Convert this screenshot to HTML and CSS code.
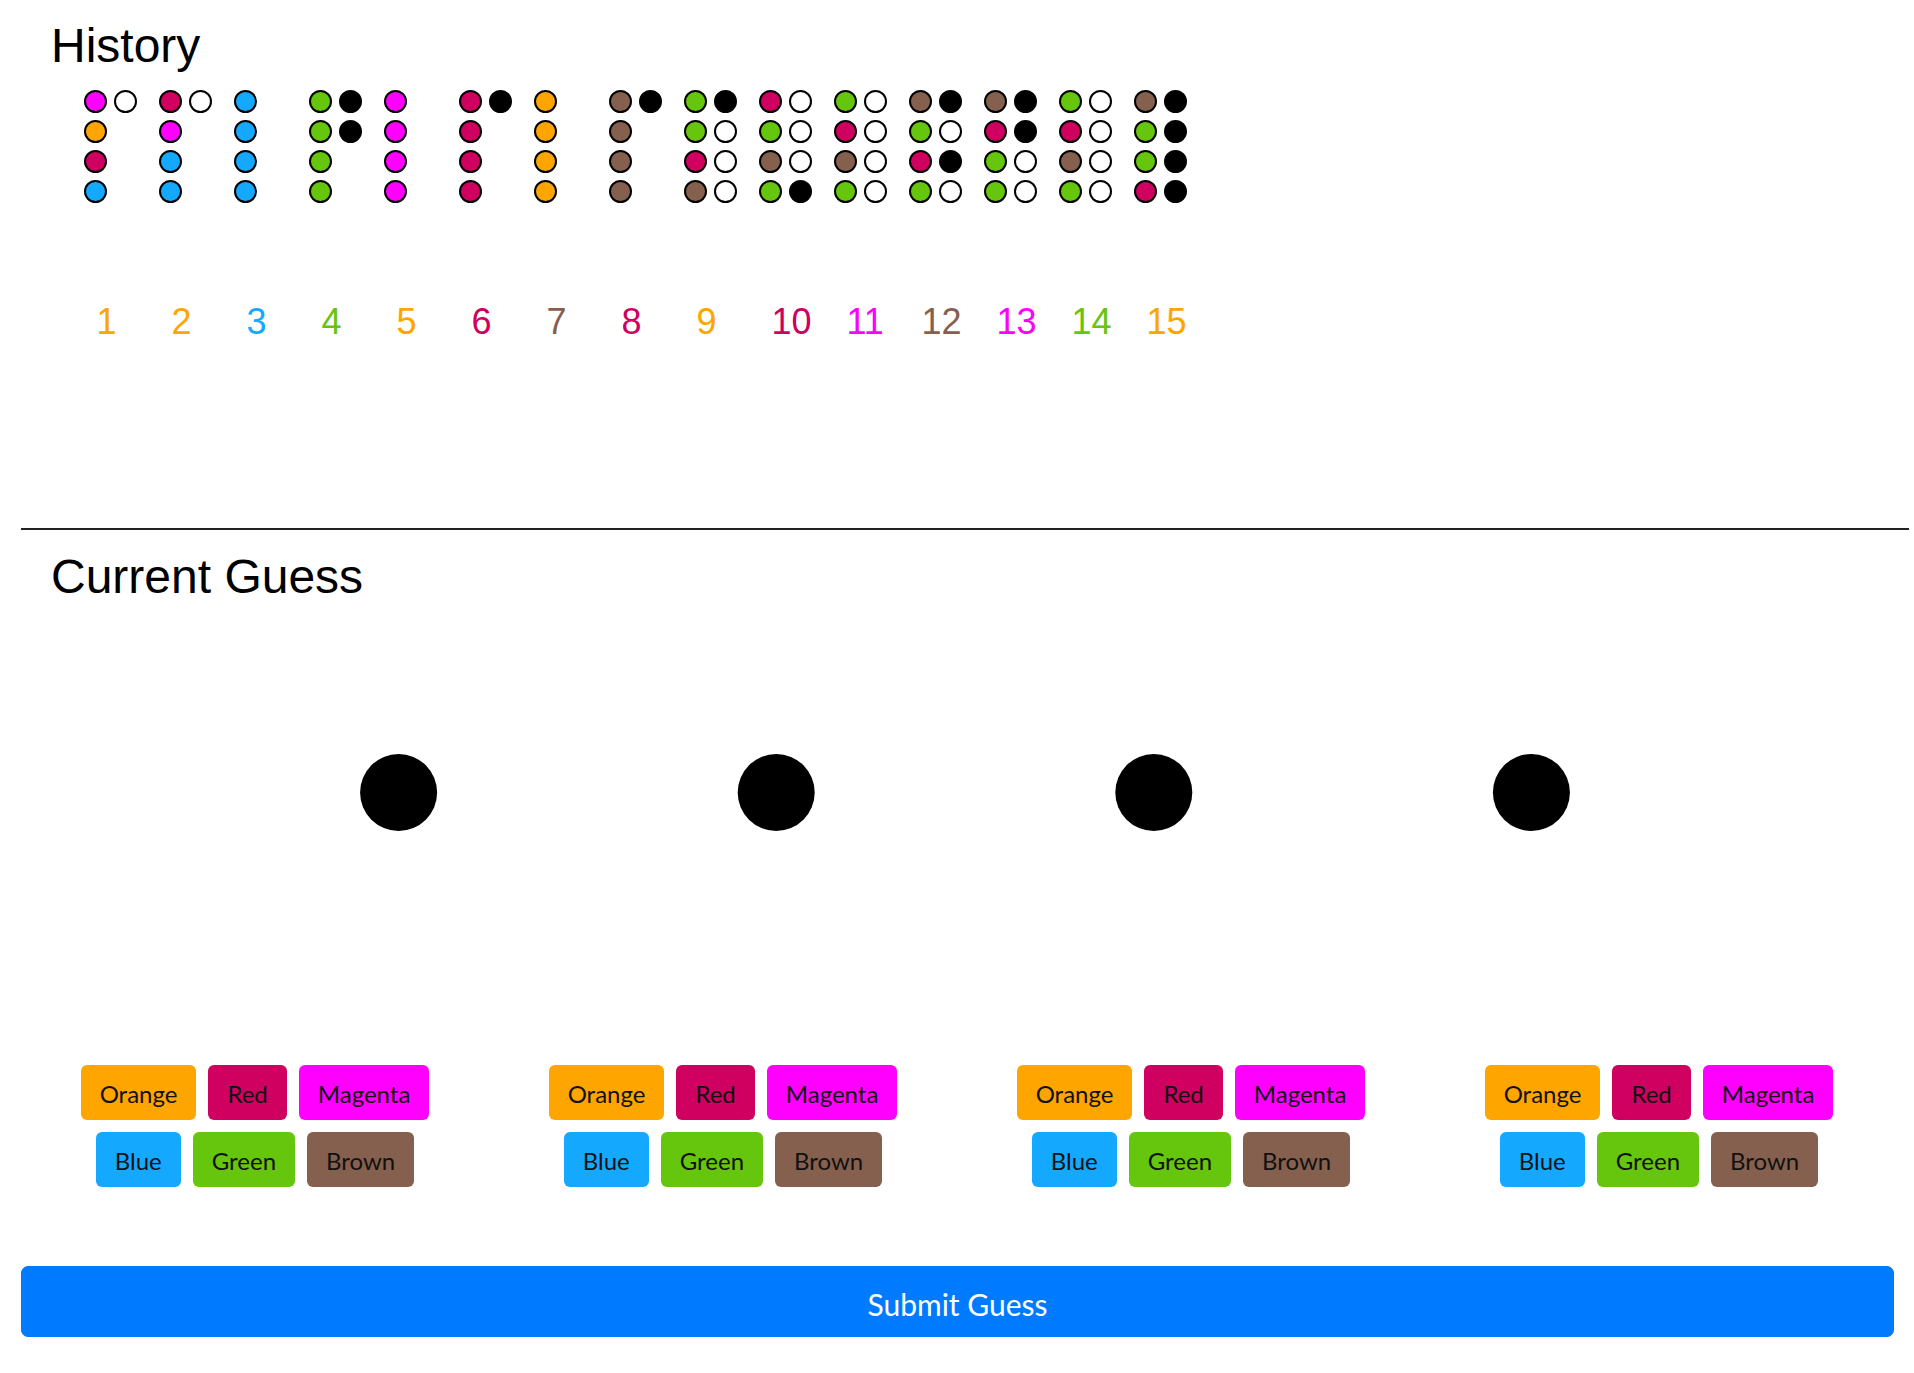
FILE: index.html
```html
<!DOCTYPE html>
<html lang="en">
<head>
<meta charset="utf-8">
<title>Mastermind</title>
<link rel="stylesheet" href="styles.css">
</head>
<body>
<main class="game">
  <section class="history">
    <h2 class="title">History</h2>
    <div class="board">
      <div class="round">
        <div class="peg-row"><span class="peg magenta"></span><span class="peg white"></span></div>
        <div class="peg-row"><span class="peg orange"></span></div>
        <div class="peg-row"><span class="peg red"></span></div>
        <div class="peg-row"><span class="peg blue"></span></div>
        <div class="num t-orange">1</div>
      </div>
      <div class="round">
        <div class="peg-row"><span class="peg red"></span><span class="peg white"></span></div>
        <div class="peg-row"><span class="peg magenta"></span></div>
        <div class="peg-row"><span class="peg blue"></span></div>
        <div class="peg-row"><span class="peg blue"></span></div>
        <div class="num t-orange">2</div>
      </div>
      <div class="round">
        <div class="peg-row"><span class="peg blue"></span></div>
        <div class="peg-row"><span class="peg blue"></span></div>
        <div class="peg-row"><span class="peg blue"></span></div>
        <div class="peg-row"><span class="peg blue"></span></div>
        <div class="num t-blue">3</div>
      </div>
      <div class="round">
        <div class="peg-row"><span class="peg green"></span><span class="peg black"></span></div>
        <div class="peg-row"><span class="peg green"></span><span class="peg black"></span></div>
        <div class="peg-row"><span class="peg green"></span></div>
        <div class="peg-row"><span class="peg green"></span></div>
        <div class="num t-green">4</div>
      </div>
      <div class="round">
        <div class="peg-row"><span class="peg magenta"></span></div>
        <div class="peg-row"><span class="peg magenta"></span></div>
        <div class="peg-row"><span class="peg magenta"></span></div>
        <div class="peg-row"><span class="peg magenta"></span></div>
        <div class="num t-orange">5</div>
      </div>
      <div class="round">
        <div class="peg-row"><span class="peg red"></span><span class="peg black"></span></div>
        <div class="peg-row"><span class="peg red"></span></div>
        <div class="peg-row"><span class="peg red"></span></div>
        <div class="peg-row"><span class="peg red"></span></div>
        <div class="num t-red">6</div>
      </div>
      <div class="round">
        <div class="peg-row"><span class="peg orange"></span></div>
        <div class="peg-row"><span class="peg orange"></span></div>
        <div class="peg-row"><span class="peg orange"></span></div>
        <div class="peg-row"><span class="peg orange"></span></div>
        <div class="num t-brown">7</div>
      </div>
      <div class="round">
        <div class="peg-row"><span class="peg brown"></span><span class="peg black"></span></div>
        <div class="peg-row"><span class="peg brown"></span></div>
        <div class="peg-row"><span class="peg brown"></span></div>
        <div class="peg-row"><span class="peg brown"></span></div>
        <div class="num t-red">8</div>
      </div>
      <div class="round">
        <div class="peg-row"><span class="peg green"></span><span class="peg black"></span></div>
        <div class="peg-row"><span class="peg green"></span><span class="peg white"></span></div>
        <div class="peg-row"><span class="peg red"></span><span class="peg white"></span></div>
        <div class="peg-row"><span class="peg brown"></span><span class="peg white"></span></div>
        <div class="num t-orange">9</div>
      </div>
      <div class="round">
        <div class="peg-row"><span class="peg red"></span><span class="peg white"></span></div>
        <div class="peg-row"><span class="peg green"></span><span class="peg white"></span></div>
        <div class="peg-row"><span class="peg brown"></span><span class="peg white"></span></div>
        <div class="peg-row"><span class="peg green"></span><span class="peg black"></span></div>
        <div class="num t-red">10</div>
      </div>
      <div class="round">
        <div class="peg-row"><span class="peg green"></span><span class="peg white"></span></div>
        <div class="peg-row"><span class="peg red"></span><span class="peg white"></span></div>
        <div class="peg-row"><span class="peg brown"></span><span class="peg white"></span></div>
        <div class="peg-row"><span class="peg green"></span><span class="peg white"></span></div>
        <div class="num t-magenta">11</div>
      </div>
      <div class="round">
        <div class="peg-row"><span class="peg brown"></span><span class="peg black"></span></div>
        <div class="peg-row"><span class="peg green"></span><span class="peg white"></span></div>
        <div class="peg-row"><span class="peg red"></span><span class="peg black"></span></div>
        <div class="peg-row"><span class="peg green"></span><span class="peg white"></span></div>
        <div class="num t-brown">12</div>
      </div>
      <div class="round">
        <div class="peg-row"><span class="peg brown"></span><span class="peg black"></span></div>
        <div class="peg-row"><span class="peg red"></span><span class="peg black"></span></div>
        <div class="peg-row"><span class="peg green"></span><span class="peg white"></span></div>
        <div class="peg-row"><span class="peg green"></span><span class="peg white"></span></div>
        <div class="num t-magenta">13</div>
      </div>
      <div class="round">
        <div class="peg-row"><span class="peg green"></span><span class="peg white"></span></div>
        <div class="peg-row"><span class="peg red"></span><span class="peg white"></span></div>
        <div class="peg-row"><span class="peg brown"></span><span class="peg white"></span></div>
        <div class="peg-row"><span class="peg green"></span><span class="peg white"></span></div>
        <div class="num t-green">14</div>
      </div>
      <div class="round">
        <div class="peg-row"><span class="peg brown"></span><span class="peg black"></span></div>
        <div class="peg-row"><span class="peg green"></span><span class="peg black"></span></div>
        <div class="peg-row"><span class="peg green"></span><span class="peg black"></span></div>
        <div class="peg-row"><span class="peg red"></span><span class="peg black"></span></div>
        <div class="num t-orange">15</div>
      </div>
    </div>
  </section>

  <hr class="divider">

  <section class="current">
    <h2 class="title">Current Guess</h2>
    <svg class="slots" width="1888" height="379" viewBox="0 0 1888 379" xmlns="http://www.w3.org/2000/svg">
      <circle cx="377.6" cy="189.5" r="38.5" fill="#000"/>
      <circle cx="755.2" cy="189.5" r="38.5" fill="#000"/>
      <circle cx="1132.8" cy="189.5" r="38.5" fill="#000"/>
      <circle cx="1510.4" cy="189.5" r="38.5" fill="#000"/>
    </svg>
    <div class="pickers">
      <div class="picker">
        <div class="picker-row">
          <button class="pick b-orange">Orange</button>
          <button class="pick b-red">Red</button>
          <button class="pick b-magenta">Magenta</button>
        </div>
        <div class="picker-row">
          <button class="pick b-blue">Blue</button>
          <button class="pick b-green">Green</button>
          <button class="pick b-brown">Brown</button>
        </div>
      </div>
      <div class="picker">
        <div class="picker-row">
          <button class="pick b-orange">Orange</button>
          <button class="pick b-red">Red</button>
          <button class="pick b-magenta">Magenta</button>
        </div>
        <div class="picker-row">
          <button class="pick b-blue">Blue</button>
          <button class="pick b-green">Green</button>
          <button class="pick b-brown">Brown</button>
        </div>
      </div>
      <div class="picker">
        <div class="picker-row">
          <button class="pick b-orange">Orange</button>
          <button class="pick b-red">Red</button>
          <button class="pick b-magenta">Magenta</button>
        </div>
        <div class="picker-row">
          <button class="pick b-blue">Blue</button>
          <button class="pick b-green">Green</button>
          <button class="pick b-brown">Brown</button>
        </div>
      </div>
      <div class="picker">
        <div class="picker-row">
          <button class="pick b-orange">Orange</button>
          <button class="pick b-red">Red</button>
          <button class="pick b-magenta">Magenta</button>
        </div>
        <div class="picker-row">
          <button class="pick b-blue">Blue</button>
          <button class="pick b-green">Green</button>
          <button class="pick b-brown">Brown</button>
        </div>
      </div>
    </div>
    <button class="submit">Submit Guess</button>
  </section>
</main>
</body>
</html>
```

FILE: styles.css
```css
html, body {
  margin: 0;
  padding: 0;
  background: #fff;
}

body {
  font-family: "Liberation Sans", Arial, sans-serif;
  color: #000;
}

.game {
  margin-left: 21px;
  width: 1888px;
  padding-top: 19px;
}

.title {
  margin: 0;
  padding-left: 30px;
  font-size: 48px;
  line-height: 53px;
  font-weight: normal;
  color: #000;
}

/* History board */
.board {
  display: flex;
  padding-left: 63px;
  margin-top: 18px;
}

.round {
  width: 75px;
  flex: 0 0 75px;
}

.peg-row {
  display: flex;
  gap: 7px;
  height: 23px;
  margin-bottom: 7px;
}

.peg-row:nth-child(4) {
  margin-bottom: 0;
}

.peg {
  display: block;
  width: 23px;
  height: 23px;
  box-sizing: border-box;
  border: 2px solid #000;
  border-radius: 50%;
}

.peg.orange { background: #ffa500; }
.peg.red { background: #cf005f; }
.peg.magenta { background: #ff00ff; }
.peg.blue { background: #14a8ff; }
.peg.green { background: #66c50d; }
.peg.brown { background: #86604f; }
.peg.white { background: #fff; }
.peg.black { background: #000; }

.num {
  margin-top: 101px;
  padding-left: 12.5px;
  font-size: 36px;
  line-height: 36px;
  white-space: nowrap;
}

.t-orange { color: #ffa500; }
.t-red { color: #cf005f; }
.t-magenta { color: #ff00ff; }
.t-blue { color: #14a8ff; }
.t-green { color: #66c50d; }
.t-brown { color: #86604f; }

/* Divider */
.divider {
  display: block;
  border: 0;
  height: 2px;
  margin: 188px 0 0 0;
  background: #222;
}

/* Current guess */
.current .title {
  margin-top: 20px;
}

.slots {
  display: block;
  width: 1888px;
  height: 379px;
}

.pickers {
  display: grid;
  grid-template-columns: repeat(4, 468px);
  margin-top: 77px;
}

.picker-row {
  display: flex;
  justify-content: center;
}

.pick {
  margin: 6px;
  padding: 10px 18px 8px;
  border: 1.5px solid transparent;
  border-radius: 6px;
  font-family: Lato, "Open Sans", sans-serif;
  font-size: 24px;
  line-height: 35px;
  color: #111;
  cursor: pointer;
}

.b-orange { background: #ffa500; }
.b-red { background: #cf005f; }
.b-magenta { background: #ff00ff; }
.b-blue { background: #14a8ff; }
.b-green { background: #66c50d; }
.b-brown { background: #86604f; }

.submit {
  display: block;
  width: 1873px;
  margin-top: 73px;
  padding: 15px 24px 9px;
  border: 1px solid #007bff;
  border-radius: 7px;
  background: #007bff;
  color: #fff;
  font-family: Lato, "Open Sans", sans-serif;
  font-size: 30px;
  line-height: 45px;
  text-align: center;
  cursor: pointer;
}
```
